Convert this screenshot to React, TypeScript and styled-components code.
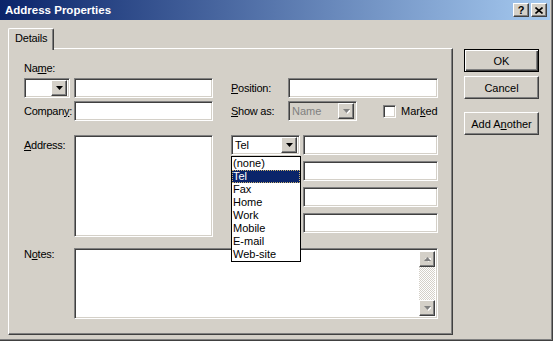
import React from "react"
import styled, { createGlobalStyle, css } from "styled-components"

const GlobalStyle = createGlobalStyle`
  html, body {
    margin: 0;
    padding: 0;
    background: #d4d0c8;
    overflow: hidden;
  }
  * {
    box-sizing: border-box;
  }
`

const raised = css`
  border: 1px solid;
  border-color: #ffffff #404040 #404040 #ffffff;
  box-shadow: inset -1px -1px #808080;
  background: #d4d0c8;
`

const sunken = css`
  border: 1px solid;
  border-color: #808080 #ffffff #ffffff #808080;
  box-shadow: inset 1px 1px #404040, inset -1px -1px #d4d0c8;
`

const Arrow = ({ up, disabled }: { up?: boolean; disabled?: boolean }) => (
  <svg width="7" height="5" viewBox="0 0 7 5">
    {disabled && <path d="M1 1h7l-3.5 4z" fill="#ffffff" />}
    <path
      d={up ? "M3.5 0L7 4H0z" : "M0 0h7L3.5 4z"}
      fill={disabled ? "#808080" : "#000000"}
    />
  </svg>
)

const Combo = ({
  width,
  value,
  disabled,
}: {
  width: number
  value?: string
  disabled?: boolean
}) => (
  <ComboBox $width={width} $disabled={disabled}>
    <ComboText $disabled={disabled}>{value}</ComboText>
    <DropButton>
      <Arrow disabled={disabled} />
    </DropButton>
  </ComboBox>
)

const phoneTypes = ["(none)", "Tel", "Fax", "Home", "Work", "Mobile", "E-mail", "Web-site"]

const App = () => (
  <>
    <GlobalStyle />
    <Window>
      <TitleBar>
        <TitleText>Address Properties</TitleText>
        <TitleButtons>
          <TitleButton>?</TitleButton>
          <TitleButton>
            <svg width="8" height="7" viewBox="0 0 8 7">
              <path d="M0.5 0.5l7 6M7.5 0.5l-7 6" stroke="#000" strokeWidth="1.6" />
            </svg>
          </TitleButton>
        </TitleButtons>
      </TitleBar>

      <Body>
        <TabColumn>
          <TabStrip>
            <Tab>Details</Tab>
          </TabStrip>
          <Panel>
            <Label>
              Na<u>m</u>e:
            </Label>
            <TopGrid>
              <NameGroup>
                <Combo width={46} />
                <Field $width={139} />
              </NameGroup>
              <Label $col={4}>
                <u>P</u>osition:
              </Label>
              <Field $col={5} />

              <Label>
                Compan<u>y</u>:
              </Label>
              <Field $col={2} />
              <Label $col={4}>
                <u>S</u>how as:
              </Label>
              <ShowAsGroup>
                <Combo width={69} value="Name" disabled />
                <CheckRow>
                  <CheckBox />
                  <span>
                    Mar<u>k</u>ed
                  </span>
                </CheckRow>
              </ShowAsGroup>
            </TopGrid>

            <AddressSection>
              <Label $top={4}>
                <u>A</u>ddress:
              </Label>
              <TextArea $width={139} $height={102} />
              <PhoneList>
                {[0, 1, 2, 3].map((i) => (
                  <PhoneRow key={i}>
                    {i === 0 ? (
                      <ComboWrap>
                        <Combo width={69} value="Tel" />
                        <DropList>
                          {phoneTypes.map((t) => (
                            <DropItem key={t} $selected={t === "Tel"}>
                              {t}
                            </DropItem>
                          ))}
                        </DropList>
                      </ComboWrap>
                    ) : (
                      <PhoneSpacer />
                    )}
                    <Field />
                  </PhoneRow>
                ))}
              </PhoneList>
            </AddressSection>

            <NotesSection>
              <Label $top={0}>
                N<u>o</u>tes:
              </Label>
              <NotesBox>
                <NotesText />
                <ScrollBar>
                  <ScrollButton>
                    <Arrow up disabled />
                  </ScrollButton>
                  <ScrollTrack />
                  <ScrollButton>
                    <Arrow disabled />
                  </ScrollButton>
                </ScrollBar>
              </NotesBox>
            </NotesSection>
          </Panel>
        </TabColumn>

        <ButtonColumn>
          <PushButton $default>OK</PushButton>
          <PushButton>Cancel</PushButton>
          <PushButton $gap>
            Add A<u>n</u>other
          </PushButton>
        </ButtonColumn>
      </Body>
    </Window>
  </>
)

export default App

const Window = styled.div`
  width: 553px;
  height: 341px;
  display: flex;
  flex-direction: column;
  background: #d4d0c8;
  border-right: 1px solid #404040;
  border-bottom: 1px solid #404040;
  box-shadow: inset -1px -1px #808080;
  padding-right: 2px;
  font-family: "Liberation Sans", Arial, sans-serif;
  font-size: 11px;
  color: #000;
`

const TitleBar = styled.div`
  height: 20px;
  display: flex;
  align-items: center;
  padding: 0 3px 0 5px;
  background: linear-gradient(90deg, #0a246a 0%, #a6caf0 100%);
  color: #ffffff;
  font-weight: bold;
  font-size: 11.5px;
`

const TitleText = styled.span`
  flex: 1;
`

const TitleButtons = styled.div`
  display: flex;
  gap: 2px;
`

const TitleButton = styled.div`
  ${raised};
  width: 16px;
  height: 14px;
  display: flex;
  align-items: center;
  justify-content: center;
  color: #000;
  font-size: 11px;
  font-weight: bold;
`

const Body = styled.div`
  display: flex;
  padding: 8px 0 0 8px;
`

const TabColumn = styled.div`
  width: 445px;
  display: flex;
  flex-direction: column;
`

const TabStrip = styled.div`
  display: flex;
  height: 20px;
  position: relative;
  z-index: 1;
`

const Tab = styled.div`
  height: 22px;
  padding: 3px 6px 0 6px;
  line-height: 13px;
  letter-spacing: -0.2px;
  background: #d4d0c8;
  border-top: 1px solid #ffffff;
  border-left: 1px solid #ffffff;
  border-right: 1px solid #404040;
  box-shadow: inset -1px 0 #808080;
  border-radius: 2px 2px 0 0;
`

const Panel = styled.div`
  height: 287px;
  padding: 13px 14px 0 15px;
  border: 1px solid;
  border-color: #ffffff #404040 #404040 #ffffff;
  box-shadow: inset -1px -1px #808080;
`

const Label = styled.div<{ $col?: number; $top?: number }>`
  width: ${(p) => (p.$col ? "auto" : "50px")};
  flex: none;
  height: 13px;
  line-height: 13px;
  white-space: nowrap;
  letter-spacing: -0.25px;
  ${(p) => p.$top !== undefined && `align-self: flex-start; margin-top: ${p.$top}px;`}
  ${(p) => p.$col && `grid-column: ${p.$col};`}

  u {
    text-decoration-thickness: 1px;
    text-underline-offset: 1px;
  }
`

const TopGrid = styled.div`
  margin-top: 3px;
  display: grid;
  grid-template-columns: 50px 139px 18px 57px 150px;
  grid-template-rows: 20px 20px;
  row-gap: 3px;
  align-items: center;
`

const NameGroup = styled.div`
  grid-column: 1 / span 2;
  display: flex;
  gap: 4px;
`

const ShowAsGroup = styled.div`
  grid-column: 5;
  display: flex;
  align-items: center;
`

const Field = styled.div<{ $width?: number; $col?: number }>`
  ${sunken};
  height: 20px;
  background: #ffffff;
  ${(p) => (p.$width ? `width: ${p.$width}px; flex: none;` : "flex: 1;")}
  ${(p) => p.$col && `grid-column: ${p.$col};`}
`

const ComboBox = styled.div<{ $width: number; $disabled?: boolean }>`
  ${sunken};
  width: ${(p) => p.$width}px;
  flex: none;
  height: 20px;
  display: flex;
  align-items: center;
  padding: 2px;
  background: ${(p) => (p.$disabled ? "#d4d0c8" : "#ffffff")};
`

const ComboText = styled.div<{ $disabled?: boolean }>`
  flex: 1;
  padding-left: 1px;
  line-height: 13px;
  color: ${(p) => (p.$disabled ? "#808080" : "#000000")};
`

const DropButton = styled.div`
  ${raised};
  width: 16px;
  height: 16px;
  display: flex;
  align-items: center;
  justify-content: center;
`

const CheckRow = styled.label`
  margin-left: 26px;
  display: flex;
  align-items: center;
  gap: 5px;
  white-space: nowrap;
`

const CheckBox = styled.span`
  ${sunken};
  width: 13px;
  height: 13px;
  background: #ffffff;
`

const AddressSection = styled.div`
  margin-top: 14px;
  display: flex;
`

const TextArea = styled.div<{ $width: number; $height: number }>`
  ${sunken};
  width: ${(p) => p.$width}px;
  height: ${(p) => p.$height}px;
  background: #ffffff;
  flex: none;
`

const PhoneList = styled.div`
  margin-left: 18px;
  flex: 1;
  display: flex;
  flex-direction: column;
  gap: 6px;
`

const PhoneRow = styled.div`
  display: flex;
  gap: 3px;
`

const PhoneSpacer = styled.div`
  width: 69px;
  flex: none;
`

const ComboWrap = styled.div`
  position: relative;
  z-index: 2;
`

const DropList = styled.div`
  position: absolute;
  top: 21px;
  left: 0;
  width: 70px;
  border: 1px solid #000000;
  background: #ffffff;
`

const DropItem = styled.div<{ $selected?: boolean }>`
  height: 13px;
  line-height: 13px;
  padding-left: 1px;
  background: ${(p) => (p.$selected ? "#0a246a" : "#ffffff")};
  color: ${(p) => (p.$selected ? "#ffffff" : "#000000")};
  outline: ${(p) => (p.$selected ? "1px dotted #c8b070" : "none")};
  outline-offset: -1px;
`

const NotesSection = styled.div`
  margin-top: 11px;
  display: flex;
`

const NotesBox = styled.div`
  ${sunken};
  flex: 1;
  height: 71px;
  display: flex;
  padding: 2px;
  background: #ffffff;
`

const NotesText = styled.div`
  flex: 1;
`

const ScrollBar = styled.div`
  width: 16px;
  display: flex;
  flex-direction: column;
`

const ScrollButton = styled.div`
  ${raised};
  height: 16px;
  display: flex;
  align-items: center;
  justify-content: center;
`

const ScrollTrack = styled.div`
  flex: 1;
  background: repeating-conic-gradient(#ffffff 0 25%, #d4d0c8 0 50%) 0 0 / 2px 2px;
`

const ButtonColumn = styled.div`
  margin-left: 11px;
  padding-top: 21px;
  width: 75px;
  display: flex;
  flex-direction: column;
  gap: 4px;
`

const PushButton = styled.div<{ $default?: boolean; $gap?: boolean }>`
  ${raised};
  height: 23px;
  display: flex;
  align-items: center;
  justify-content: center;
  white-space: nowrap;
  margin-top: ${(p) => (p.$gap ? "9px" : "0")};
  ${(p) =>
    p.$default &&
    css`
      border: 1px solid #000000;
      box-shadow: inset 1px 1px #ffffff, inset -1px -1px #404040, inset -2px -2px #808080;
    `}

  u {
    text-underline-offset: 1px;
  }
`
